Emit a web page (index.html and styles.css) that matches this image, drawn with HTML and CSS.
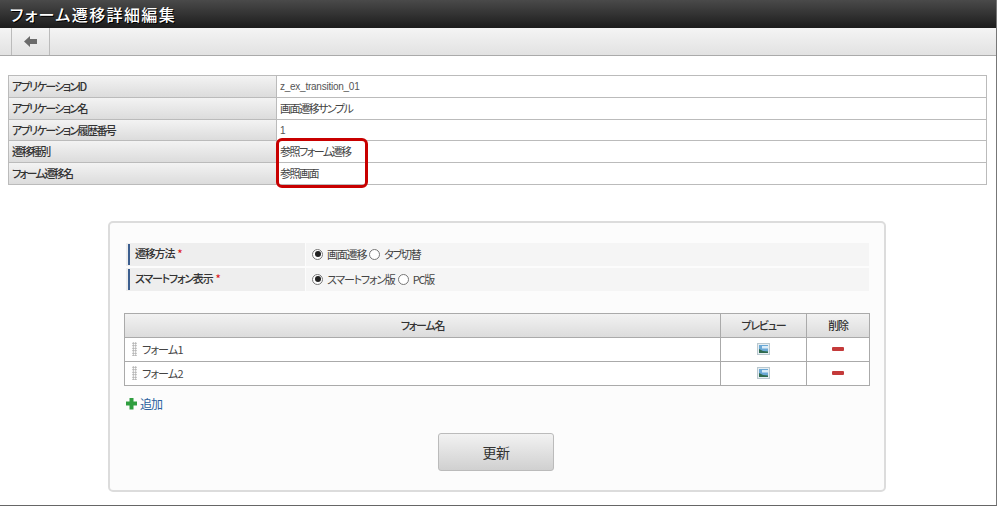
FILE: index.html
```html
<!DOCTYPE html>
<html lang="ja">
<head>
<meta charset="utf-8">
<title>フォーム遷移詳細編集</title>
<link rel="stylesheet" href="styles.css">
</head>
<body>
<div class="window">
  <header class="titlebar"><h1>フォーム遷移詳細編集</h1></header>
  <nav class="toolbar">
    <button class="back" type="button" aria-label="戻る">
      <svg width="13" height="11" viewBox="0 0 13 11"><path d="M0 5.500 L6 0 V3 H13 V8 H6 V11 Z" fill="#6b6b6b"/></svg>
    </button>
  </nav>
  <main class="content">
    <section class="info">
      <div class="info-row"><div class="info-label">アプリケーションID</div><div class="info-value latin">z_ex_transition_01</div></div>
      <div class="info-row"><div class="info-label">アプリケーション名</div><div class="info-value">画面遷移サンプル</div></div>
      <div class="info-row"><div class="info-label">アプリケーション履歴番号</div><div class="info-value latin">1</div></div>
      <div class="info-row"><div class="info-label">遷移種別</div><div class="info-value">参照フォーム遷移</div></div>
      <div class="info-row"><div class="info-label">フォーム遷移名</div><div class="info-value">参照画面</div></div>
      <div class="highlight"></div>
    </section>
    <section class="panel">
      <div class="form-rows">
        <div class="form-row">
          <div class="form-label"><span class="form-label-text">遷移方法<i class="req">*</i></span></div>
          <div class="form-value">
            <span class="radio on"></span><span class="radio-text">画面遷移</span>
            <span class="radio next"></span><span class="radio-text">タブ切替</span>
          </div>
        </div>
        <div class="form-row">
          <div class="form-label"><span class="form-label-text">スマートフォン表示<i class="req">*</i></span></div>
          <div class="form-value">
            <span class="radio on"></span><span class="radio-text">スマートフォン版</span>
            <span class="radio next"></span><span class="radio-text">PC版</span>
          </div>
        </div>
      </div>
      <div class="grid">
        <div class="grid-row head">
          <div class="cell name">フォーム名</div>
          <div class="cell prev">プレビュー</div>
          <div class="cell del">削除</div>
        </div>
        <div class="grid-row">
          <div class="cell name left"><span class="grip"></span>フォーム1</div>
          <div class="cell prev"><svg class="pic" width="13" height="12" viewBox="0 0 13 12"><rect x=".5" y=".5" width="12" height="11" fill="#e6eef2" stroke="#b9c8cf"/><rect x="2" y="2" width="9" height="8" fill="#6aa8d6"/><rect x="5" y="3" width="6" height="2.500" fill="#d9ecf8"/><path d="M2 10 V6 L6 8 L11 8.500 V10 Z" fill="#2f6b4f"/></svg></div>
          <div class="cell del"><span class="minus"></span></div>
        </div>
        <div class="grid-row">
          <div class="cell name left"><span class="grip"></span>フォーム2</div>
          <div class="cell prev"><svg class="pic" width="13" height="12" viewBox="0 0 13 12"><rect x=".5" y=".5" width="12" height="11" fill="#e6eef2" stroke="#b9c8cf"/><rect x="2" y="2" width="9" height="8" fill="#6aa8d6"/><rect x="5" y="3" width="6" height="2.500" fill="#d9ecf8"/><path d="M2 10 V6 L6 8 L11 8.500 V10 Z" fill="#2f6b4f"/></svg></div>
          <div class="cell del"><span class="minus"></span></div>
        </div>
      </div>
      <a class="add" href="#"><svg width="11" height="13" viewBox="0 0 11 13"><path d="M3.500 1 H7.500 V4.500 H11 V8.500 H7.500 V12.500 H3.500 V8.500 H0 V4.500 H3.500 Z" fill="#2f9e3f"/></svg>追加</a>
      <div class="actions"><button class="update" type="button">更新</button></div>
    </section>
  </main>
</div>
</body>
</html>
```
FILE: styles.css
```css
* { box-sizing: border-box; }
html, body { margin: 0; padding: 0; }
body {
  font-family: "Noto Sans CJK JP", "Liberation Sans", sans-serif;
  font-size: 11px;
  font-feature-settings: "palt";
  color: #333;
  background: #fff;
}
.window {
  width: 997px;
  height: 506px;
  border-right: 1px solid #777;
  border-bottom: 1px solid #666;
  overflow: hidden;
}
.titlebar {
  height: 28px;
  background: linear-gradient(#4a4a4a, #1c1c1c);
  display: flex;
  align-items: center;
  padding-left: 10px;
}
.titlebar h1 {
  margin: 0;
  font-size: 16px;
  font-weight: 500;
  line-height: 1;
  color: #fff;
  letter-spacing: 1.400px;
  text-shadow: 1px 1px 0 #000;
}
.toolbar {
  height: 28px;
  padding-left: 11px;
  background: linear-gradient(#f4f4f4, #e2e2e2);
  border-bottom: 1px solid #aaa;
  display: flex;
}
.back {
  width: 39px;
  padding: 0 1px 0 0;
  border: 0;
  border-left: 1px solid #bbb;
  border-right: 1px solid #bbb;
  background: transparent;
  display: flex;
  align-items: center;
  justify-content: center;
}
.content { padding: 19px 9px 0 8px; }
.info {
  position: relative;
  border: 1px solid #bbb;
  border-bottom: 0;
}
.info-row {
  height: 21.800px;
  display: flex;
  border-bottom: 1px solid #bbb;
}
.info-label {
  width: 268px;
  padding-left: 3px;
  background: linear-gradient(#f3f3f3, #dcdcdc);
  border-right: 1px solid #bbb;
  font-weight: 500;
  line-height: 20px;
  letter-spacing: -1.600px;
  color: #333;
}
.info-value {
  flex: 1;
  padding-left: 3px;
  line-height: 20px;
  letter-spacing: -1.500px;
  color: #444;
}
.info-value.latin {
  font-family: "Liberation Sans", sans-serif;
  font-size: 10px;
  line-height: 21px;
  letter-spacing: -.25px;
  color: #555;
}
.highlight {
  position: absolute;
  left: 267px;
  top: 62px;
  width: 92px;
  height: 50px;
  border: 3px solid #c80000;
  border-radius: 6px;
}
.panel {
  margin: 36px 101px 0 100px;
  height: 271px;
  padding: 20px 14px 0 14px;
  background: #fcfcfc;
  border: 2px solid #dcdcdc;
  border-radius: 5px;
}
.form-rows { padding: 0 1px 0 2px; }
.form-row {
  display: flex;
  height: 25px;
  padding-bottom: 2px;
}
.form-label {
  width: 179px;
  background: #eee;
  display: flex;
  align-items: center;
  padding: 1px 0 1px 2px;
  margin-right: 1px;
}
.form-label-text {
  height: 100%;
  border-left: 2px solid #3d5f8f;
  padding-left: 5px;
  font-weight: 500;
  line-height: 19px;
  letter-spacing: -1.200px;
}
.req { color: #d22; font-style: normal; margin-left: 3px; }
.form-value {
  flex: 1;
  background: #f5f5f5;
  display: flex;
  align-items: center;
  padding-left: 6px;
  letter-spacing: -1.200px;
  color: #444;
}
.radio {
  width: 11px;
  height: 11px;
  border: 1px solid #777;
  border-radius: 50%;
  background: #fff;
  display: inline-flex;
  align-items: center;
  justify-content: center;
}
.radio.next { margin-left: 3px; }
.radio.on::after {
  content: "";
  width: 6px;
  height: 6px;
  border-radius: 50%;
  background: #222;
}
.radio-text { margin-left: 4px; }
.grid {
  margin-top: 20px;
  border: 1px solid #aaa;
  border-bottom-width: 0;
}
.grid-row {
  display: flex;
  height: 24px;
  border-bottom: 1px solid #aaa;
  background: #fff;
}
.grid-row.head {
  background: linear-gradient(#f2f2f2, #dcdcdc);
  font-weight: 500;
  letter-spacing: -1.200px;
}
.cell {
  display: flex;
  align-items: center;
  justify-content: center;
  border-right: 1px solid #aaa;
}
.cell.name { flex: 1; }
.cell.left { justify-content: flex-start; padding-left: 7px; letter-spacing: -.8px; color: #444; }
.cell.prev { width: 86px; }
.cell.del { width: 62px; border-right: 0; }
.grip {
  width: 5px;
  height: 14px;
  margin-right: 5px;
  background-image: radial-gradient(#aaa 0.8px, transparent 1px);
  background-size: 2.500px 2.500px;
}
.minus {
  width: 12px;
  height: 4px;
  border-radius: 1px;
  background: #c43a3a;
}
.add {
  display: flex;
  align-items: center;
  gap: 3px;
  margin: 10px 0 0 2px;
  height: 16px;
  font-size: 12px;
  letter-spacing: -1px;
  color: #2a5f9e;
  text-decoration: none;
}
.actions {
  display: flex;
  justify-content: center;
  margin-top: 21px;
  padding-right: 2px;
}
.update {
  width: 116px;
  height: 38px;
  padding: 0;
  border: 1px solid #bbb;
  border-radius: 3px;
  background: linear-gradient(#f2f2f2, #d0d0d0);
  font-family: inherit;
  font-size: 14px;
  letter-spacing: -.5px;
  color: #333;
}
```
